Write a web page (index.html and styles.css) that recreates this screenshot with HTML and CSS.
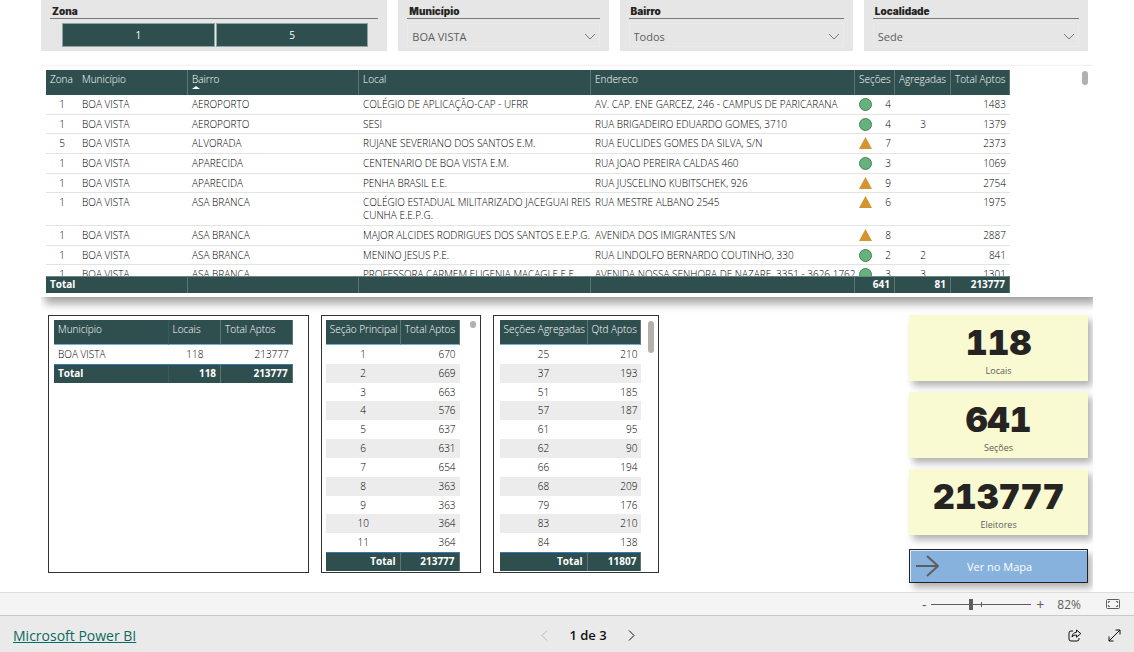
FILE: index.html
```html
<!DOCTYPE html>
<html lang="pt-BR">
<head>
<meta charset="utf-8">
<title>Locais de votação - Boa Vista</title>
<link rel="stylesheet" href="styles.css">
</head>
<body>
<main class="canvas">
  <section class="filters">
    <div class="filter">
      <h2 class="filter-title">Zona</h2>
      <div class="zones"><button type="button">1</button><button type="button">5</button></div>
    </div>
    <div class="filter">
      <label class="filter-title" for="municipio">Município</label>
      <div class="drop"><select id="municipio"><option>BOA VISTA</option></select><svg class="chevron" viewBox="0 0 12 7"><path d="M1 1l5 5 5-5"/></svg></div>
    </div>
    <div class="filter">
      <label class="filter-title" for="bairro">Bairro</label>
      <div class="drop"><select id="bairro"><option>Todos</option></select><svg class="chevron" viewBox="0 0 12 7"><path d="M1 1l5 5 5-5"/></svg></div>
    </div>
    <div class="filter">
      <label class="filter-title" for="localidade">Localidade</label>
      <div class="drop"><select id="localidade"><option>Sede</option></select><svg class="chevron" viewBox="0 0 12 7"><path d="M1 1l5 5 5-5"/></svg></div>
    </div>
  </section>

  <section class="places">
    <div class="places-view">
      <div class="places-rows">
      <table class="grid places-grid">
        <colgroup><col class="p-zona"><col class="p-mun"><col class="p-bairro"><col class="p-local"><col><col class="p-sec"><col class="p-agr"><col class="p-tot"></colgroup>
        <thead><tr><th>Zona</th><th>Município</th><th>Bairro<span class="sort"></span></th><th>Local</th><th>Endereco</th><th>Seções</th><th>Agregadas</th><th>Total Aptos</th></tr></thead>
        <tbody>
          <tr><td>1</td><td>BOA VISTA</td><td>AEROPORTO</td><td>COLÉGIO DE APLICAÇÃO-CAP - UFRR</td><td>AV. CAP. ENE GARCEZ, 246 - CAMPUS DE PARICARANA</td><td><span class="status"><i class="ok"></i>4</span></td><td></td><td>1483</td></tr>
          <tr><td>1</td><td>BOA VISTA</td><td>AEROPORTO</td><td>SESI</td><td>RUA BRIGADEIRO EDUARDO GOMES, 3710</td><td><span class="status"><i class="ok"></i>4</span></td><td>3</td><td>1379</td></tr>
          <tr><td>5</td><td>BOA VISTA</td><td>ALVORADA</td><td>RUJANE SEVERIANO DOS SANTOS E.M.</td><td>RUA EUCLIDES GOMES DA SILVA, S/N</td><td><span class="status"><i class="warn"></i>7</span></td><td></td><td>2373</td></tr>
          <tr><td>1</td><td>BOA VISTA</td><td>APARECIDA</td><td>CENTENARIO DE BOA VISTA E.M.</td><td>RUA JOAO PEREIRA CALDAS 460</td><td><span class="status"><i class="ok"></i>3</span></td><td></td><td>1069</td></tr>
          <tr><td>1</td><td>BOA VISTA</td><td>APARECIDA</td><td>PENHA BRASIL E.E.</td><td>RUA JUSCELINO KUBITSCHEK, 926</td><td><span class="status"><i class="warn"></i>9</span></td><td></td><td>2754</td></tr>
          <tr><td>1</td><td>BOA VISTA</td><td>ASA BRANCA</td><td>COLÉGIO ESTADUAL MILITARIZADO JACEGUAI REIS<br>CUNHA E.E.P.G.</td><td>RUA MESTRE ALBANO 2545</td><td><span class="status"><i class="warn"></i>6</span></td><td></td><td>1975</td></tr>
          <tr><td>1</td><td>BOA VISTA</td><td>ASA BRANCA</td><td>MAJOR ALCIDES RODRIGUES DOS SANTOS E.E.P.G.</td><td>AVENIDA DOS IMIGRANTES S/N</td><td><span class="status"><i class="warn"></i>8</span></td><td></td><td>2887</td></tr>
          <tr><td>1</td><td>BOA VISTA</td><td>ASA BRANCA</td><td>MENINO JESUS P.E.</td><td>RUA LINDOLFO BERNARDO COUTINHO, 330</td><td><span class="status"><i class="ok"></i>2</span></td><td>2</td><td>841</td></tr>
          <tr><td>1</td><td>BOA VISTA</td><td>ASA BRANCA</td><td>PROFESSORA CARMEM EUGENIA MACAGI E.E.E.</td><td>AVENIDA NOSSA SENHORA DE NAZARE, 3351 - 3626 1762</td><td><span class="status"><i class="ok"></i>3</span></td><td>3</td><td>1301</td></tr>
        </tbody>
      </table>
      </div>
      <table class="grid places-grid">
        <colgroup><col class="p-zona"><col class="p-mun"><col class="p-bairro"><col class="p-local"><col><col class="p-sec"><col class="p-agr"><col class="p-tot"></colgroup>
        <tfoot><tr><td colspan="2">Total</td><td></td><td></td><td></td><td>641</td><td>81</td><td>213777</td></tr></tfoot>
      </table>
    </div>
    <span class="thumb"></span>
  </section>

  <section class="bottom">
    <div class="panel">
      <table class="grid small city">
        <colgroup><col class="c-mun"><col class="c-loc"><col class="c-tot"></colgroup>
        <thead><tr><th>Município</th><th>Locais</th><th>Total Aptos</th></tr></thead>
        <tbody><tr><td>BOA VISTA</td><td>118</td><td>213777</td></tr></tbody>
        <tfoot><tr><td>Total</td><td>118</td><td>213777</td></tr></tfoot>
      </table>
    </div>
    <div class="panel">
      <div class="panel-view">
      <table class="grid small striped">
        <colgroup><col class="s-first"><col></colgroup>
        <thead><tr><th>Seção Principal</th><th>Total Aptos</th></tr></thead>
        <tbody>
          <tr><td>1</td><td>670</td></tr><tr><td>2</td><td>669</td></tr><tr><td>3</td><td>663</td></tr>
          <tr><td>4</td><td>576</td></tr><tr><td>5</td><td>637</td></tr><tr><td>6</td><td>631</td></tr>
          <tr><td>7</td><td>654</td></tr><tr><td>8</td><td>363</td></tr><tr><td>9</td><td>363</td></tr>
          <tr><td>10</td><td>364</td></tr><tr><td>11</td><td>364</td></tr>
        </tbody>
        <tfoot><tr><td>Total</td><td>213777</td></tr></tfoot>
      </table>
      </div>
      <span class="thumb thumb-short"></span>
    </div>
    <div class="panel panel-wide">
      <div class="panel-view">
      <table class="grid small striped">
        <colgroup><col class="a-first"><col></colgroup>
        <thead><tr><th>Seções Agregadas</th><th>Qtd Aptos</th></tr></thead>
        <tbody>
          <tr><td>25</td><td>210</td></tr><tr><td>37</td><td>193</td></tr><tr><td>51</td><td>185</td></tr>
          <tr><td>57</td><td>187</td></tr><tr><td>61</td><td>95</td></tr><tr><td>62</td><td>90</td></tr>
          <tr><td>66</td><td>194</td></tr><tr><td>68</td><td>209</td></tr><tr><td>79</td><td>176</td></tr>
          <tr><td>83</td><td>210</td></tr><tr><td>84</td><td>138</td></tr>
        </tbody>
        <tfoot><tr><td>Total</td><td>11807</td></tr></tfoot>
      </table>
      </div>
      <span class="thumb thumb-long"></span>
    </div>
    <div class="kpis">
      <div class="kpi"><strong>118</strong><span>Locais</span></div>
      <div class="kpi"><strong>641</strong><span>Seções</span></div>
      <div class="kpi"><strong>213777</strong><span>Eleitores</span></div>
      <button type="button" class="map"><svg viewBox="0 0 24 24"><path d="M1 12h22M12 2l11 10-11 10"/></svg><span>Ver no Mapa</span></button>
    </div>
  </section>
</main>

<div class="zoombar">
  <button type="button" class="step" aria-label="Reduzir">-</button>
  <input type="range" min="0" max="100" value="39" aria-label="Zoom">
  <button type="button" class="step" aria-label="Ampliar">+</button>
  <span class="percent">82%</span>
  <button type="button" class="icon" aria-label="Ajustar à página"><svg width="14" height="10" viewBox="0 0 14 10"><rect x=".5" y=".5" width="13" height="9" rx="1"/><path d="M2.500 4V2.500H4M10 2.500h1.500V4M11.500 6v1.500H10M4 7.500H2.500V6"/></svg></button>
</div>
<footer class="footer">
  <a href="#">Microsoft Power BI</a>
  <nav class="pager">
    <button type="button" class="icon prev" aria-label="Anterior"><svg width="7" height="11" viewBox="0 0 7 11"><path d="M6 .5l-5 5 5 5"/></svg></button>
    <span>1 de 3</span>
    <button type="button" class="icon" aria-label="Próxima"><svg width="7" height="11" viewBox="0 0 7 11"><path d="M1 .5l5 5-5 5"/></svg></button>
  </nav>
  <div class="actions">
    <button type="button" class="icon" aria-label="Compartilhar"><svg width="14" height="13" viewBox="0 0 14 13"><path d="M5 2H3a2 2 0 0 0-2 2v6a2 2 0 0 0 2 2h6a2 2 0 0 0 2-2V9M8.500 1v2.200C6 3.400 4.300 5 4 8c1.200-1.500 2.500-2 4.500-2v2.200L12.800 4.600z"/></svg></button>
    <button type="button" class="icon" aria-label="Tela inteira"><svg width="13" height="13" viewBox="0 0 13 13"><path d="M1 12L12 1M7.500 1H12v4.500M1 7.500V12h4.500"/></svg></button>
  </div>
</footer>
</body>
</html>
```
FILE: styles.css
```css
* { box-sizing: border-box; }
body {
  margin: 0;
  min-height: 100vh;
  display: flex;
  flex-direction: column;
  background: #fff;
  color: #252423;
  font: 10px/13px "Open Sans", "Noto Sans", sans-serif;
}
button, select, input { font: inherit; margin: 0; }
button { padding: 0; border: 0; background: none; color: inherit; cursor: pointer; }
svg { fill: none; stroke: currentColor; }

.canvas { flex: 1; margin: 0 41px; overflow: hidden; }

/* Filters */
.filters {
  display: grid;
  grid-template-columns: 346fr 210fr 233fr 224fr;
  gap: 11px;
  padding-right: 5px;
}
.filter { height: 51px; padding: 5px 9px 4px; background: #e6e6e6; }
.filter-title {
  display: block;
  margin: 0 0 4px;
  padding-left: 2px;
  height: 14px;
  border-bottom: 1px solid #777;
  font: 900 10px/13px Inter, sans-serif;
}
.zones { display: flex; gap: 1px; margin: 0 10px 0 12px; }
.zones button {
  flex: 1;
  height: 24px;
  border: 1px solid #8fa3a2;
  background: #2f4f4f;
  color: #fff;
}
.drop { position: relative; height: 24px; padding-top: 1px; border: 1px solid #eaeaea; }
.drop select {
  width: 100%;
  height: 22px;
  padding: 0 4px;
  border: 0;
  background: none;
  appearance: none;
  color: #605e5c;
  font-size: 11px;
}
.chevron { position: absolute; right: 3px; top: 9px; width: 12px; height: 7px; color: #777; pointer-events: none; }

/* Tables */
.grid { border-collapse: separate; border-spacing: 0; table-layout: fixed; }
.grid th, .grid td { padding: 3px 4px; text-align: left; vertical-align: top; white-space: nowrap; }
.grid tbody td { font-weight: 320; color: #000; }
.grid th {
  height: 25px;
  padding-right: 0;
  background: #2f4f4f;
  color: #fff;
  font-weight: 360;
  border-right: 1px solid #5b7675;
}
.grid tfoot td {
  background: #2f4f4f;
  color: #fff;
  font-weight: 700;
  border-right: 1px solid #5b7675;
}

.places {
  display: flex;
  justify-content: space-between;
  margin-top: 15px;
  padding: 4px 5px 4px;
  background: #fff;
  box-shadow: 4px 7px 8px rgba(0, 0, 0, .34), 0 0 2px rgba(0, 0, 0, .12);
}
.places-view { width: calc(100% - 78px); }
.places-rows { height: 206px; overflow: hidden; }
.places-grid { width: 100%; }
.p-zona { width: 32px; }
.p-mun { width: 110px; }
.p-bairro { width: 171px; }
.p-local { width: 232px; }
.p-sec { width: 40px; }
.p-agr { width: 56px; }
.p-tot { width: 59px; }
.places-grid th:first-child { border-right: 0; }
.places-grid tbody td { height: 20px; border-bottom: 1px solid #e3e3e3; }
.places-grid tbody tr:nth-child(3n+2) td { height: 19px; padding-bottom: 2px; }
.places-grid tbody td:nth-child(1), .places-grid tbody td:nth-child(7) { text-align: center; }
.places-grid td:nth-child(8) { text-align: right; }
.places-grid tfoot td { padding: 1px 4px; height: 17px; border-top: 1px solid #6d8685; }
.places-grid tfoot td:nth-child(n+5) { text-align: right; }
.sort { display: block; width: 0; border: 4px solid transparent; border-top: 0; border-bottom: 3px solid #fff; }
.status { display: flex; justify-content: space-between; }
.ok { width: 13px; height: 13px; border: 1px solid #4a8259; border-radius: 50%; background: #66b27c; }
.warn { width: 13px; height: 12px; background: #d4952f; clip-path: polygon(50% 0, 100% 100%, 0 100%); }

.thumb { width: 6px; height: 14px; margin-top: 1px; border-radius: 3px; background: #b3b0ad; }
.thumb-short { height: 7px; }
.thumb-long { height: 32px; }

/* Lower area */
.bottom {
  display: grid;
  grid-template-columns: 261fr 160fr 167fr 226fr 179fr;
  gap: 12px;
  margin-top: 18px;
  padding: 0 5px 8px 7px;
}
.panel {
  display: flex;
  justify-content: space-between;
  align-items: flex-start;
  height: 258px;
  padding: 4px 4px 2px;
  border: 1px solid #333;
}
.panel:first-child { padding-left: 5px; }
.panel-wide { padding-left: 6px; }
.panel-view { width: calc(100% - 16px); }
.panel-wide .panel-view { width: calc(100% - 13px); }
.small { width: 100%; }
.city { width: calc(100% - 11px); }
.small th { border-bottom: 1px solid #78aede; }
.small td { height: 19px; }
.small td:nth-child(n+2) { text-align: right; }
.small tfoot td { padding-top: 2px; border-top: 1px solid #3579b8; }
.c-mun { width: 48%; }
.c-loc { width: 22%; }
.c-tot { width: 30%; }
.city tbody td:nth-child(2) { text-align: center; }
.city th:first-child, .city tfoot td:first-child { border-right-color: #3b5a59; }
.s-first { width: 56%; }
.a-first { width: 62%; }
.striped tbody td { height: 19px; }
.striped tbody tr:nth-child(6n+3) td { height: 18px; padding-bottom: 2px; }
.striped tbody td:first-child { text-align: center; }
.striped tfoot td { text-align: right; }
.striped tbody tr:nth-child(even) td { background: #ececec; }

.kpis { grid-column: 5; display: flex; flex-direction: column; gap: 11px; }
.kpi {
  display: flex;
  flex-direction: column;
  align-items: center;
  height: 66px;
  padding-top: 8px;
  background: #f9f9d2;
  box-shadow: 4px 5px 7px rgba(0, 0, 0, .3);
}
.kpi strong { font: 900 34px/40px Inter, sans-serif; font-variant-numeric: tabular-nums; }
.kpi span { color: #605e5c; font-size: 9px; line-height: 15px; }
.map {
  display: flex;
  align-items: center;
  height: 34px;
  margin-top: 3px;
  padding: 0 5px;
  border: 1px solid #222;
  background: #86b2dd;
  color: #fff;
  font-size: 11px;
  box-shadow: inset 1px 1px #dfeaf5, 4px 5px 7px rgba(0, 0, 0, .3);
}
.map svg { width: 24px; height: 24px; color: #605e5c; stroke-width: 2; }
.map span { flex: 1; padding-right: 22px; }

/* Status bar */
.zoombar {
  display: flex;
  align-items: center;
  justify-content: flex-end;
  height: 23px;
  padding-right: 14px;
  border-top: 1px solid #dcdcdc;
  background: #f4f4f4;
  color: #605e5c;
  font-size: 12px;
}
.step { width: 12px; font-size: 14px; }
.zoombar input {
  width: 100px;
  height: 14px;
  margin: 0 3px 0 1px;
  appearance: none;
  background:
    linear-gradient(#605e5c, #605e5c) 50% 50% / 1px 5px no-repeat,
    linear-gradient(#605e5c, #605e5c) 0 50% / 100% 1px no-repeat;
}
.zoombar input::-webkit-slider-thumb { appearance: none; width: 4px; height: 11px; background: #605e5c; }
.percent { margin: 0 25px 0 11px; }
.icon { display: flex; }

.footer {
  display: grid;
  grid-template-columns: 1fr auto 1fr;
  align-items: center;
  height: 37px;
  padding: 3px 13px 0 13px;
  border-top: 1px solid #c8c8c8;
  background: #eaeaea;
}
.footer a { color: #0b6a5f; font-size: 14px; line-height: 18px; }
.pager { display: flex; align-items: center; gap: 21px; padding-left: 42px; color: #111; font-size: 13px; font-weight: 600; }
.prev { color: #bbb; }
.actions { display: flex; justify-content: flex-end; gap: 26px; color: #111; }
```
